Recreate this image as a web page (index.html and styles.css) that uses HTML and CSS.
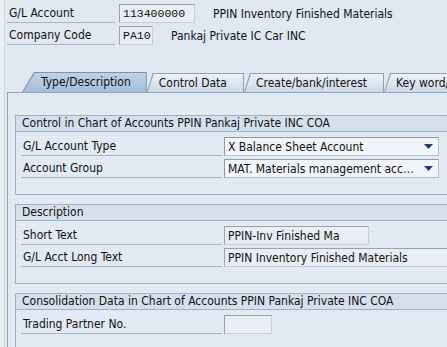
FILE: index.html
```html
<!DOCTYPE html>
<html lang="en">
<head>
    <meta charset="UTF-8">
    <meta name="viewport" content="width=device-width, initial-scale=1.0">
    <title>G/L Account</title>
    <link rel="stylesheet" href="styles.css">
</head>
<body>
    <div class="rail"></div>
    <div class="main">
        <div class="head">
            <div class="hrow">
                <span class="hlabel">G/L Account</span>
                <span class="field mono acct">113400000</span>
                <span class="htext">PPIN Inventory Finished Materials</span>
            </div>
            <div class="hrow">
                <span class="hlabel">Company Code</span>
                <span class="field mono ccode">PA10</span>
                <span class="htext">Pankaj Private IC Car INC</span>
            </div>
        </div>

        <div class="tabs">
            <div class="tab active"><span>Type/Description</span></div>
            <div class="tab"><span>Control Data</span></div>
            <div class="tab"><span>Create/bank/interest</span></div>
            <div class="tab"><span>Key word/translation</span></div>
        </div>

        <div class="panel">
            <div class="group">
                <div class="ghead">Control in Chart of Accounts PPIN Pankaj Private INC COA</div>
                <div class="gbody">
                    <div class="row">
                        <span class="label">G/L Account Type</span>
                        <span class="field select">
                            <span class="val">X Balance Sheet Account</span>
                            <svg class="arrow" width="9" height="5" viewBox="0 0 9 5"><path d="M0 0H9L4.5 5Z" fill="#243f66"/></svg>
                        </span>
                    </div>
                    <div class="row">
                        <span class="label">Account Group</span>
                        <span class="field select">
                            <span class="val">MAT. Materials management accounts</span>
                            <svg class="arrow" width="9" height="5" viewBox="0 0 9 5"><path d="M0 0H9L4.5 5Z" fill="#243f66"/></svg>
                        </span>
                    </div>
                </div>
            </div>

            <div class="group">
                <div class="ghead">Description</div>
                <div class="gbody">
                    <div class="row">
                        <span class="label">Short Text</span>
                        <span class="field short">PPIN-Inv Finished Ma</span>
                    </div>
                    <div class="row">
                        <span class="label">G/L Acct Long Text</span>
                        <span class="field long">PPIN Inventory Finished Materials</span>
                    </div>
                </div>
            </div>

            <div class="group">
                <div class="ghead">Consolidation Data in Chart of Accounts PPIN Pankaj Private INC COA</div>
                <div class="gbody">
                    <div class="row">
                        <span class="label">Trading Partner No.</span>
                        <span class="field partner"></span>
                    </div>
                </div>
            </div>
        </div>
    </div>
</body>
</html>
```

FILE: styles.css
```css
body {
    margin: 0;
    display: flex;
    overflow: hidden;
    height: 347px;
    background: #e0e8f1;
    font-family: "DejaVu Sans Condensed", "Liberation Sans", Arial, sans-serif;
    font-size: 12px;
    color: #111;
}
.rail { flex: none; width: 4px; background: #eceff3; border-right: 1px solid #cdd4dc; }
.main { flex: none; width: 600px; padding-left: 2px; }

/* header fields */
.head { display: flex; flex-direction: column; gap: 3px; padding-top: 4px; }
.hrow { display: flex; align-items: center; height: 19px; }
.hlabel { width: 106px; padding-left: 2px; height: 18px; line-height: 18px; border-bottom: 1px solid #a9b5c3; }
.hrow .field { margin-left: 4px; }
.htext { margin-left: 18px; }

.field {
    display: flex;
    align-items: center;
    box-sizing: border-box;
    height: 19px;
    padding: 0 3px;
    background: #e8eef4;
    border: 1px solid;
    border-color: #9aa3ad #c9cfd6 #c9cfd6 #9aa3ad;
    white-space: nowrap;
}
.mono { font-family: "Liberation Mono", "Courier New", monospace; font-size: 11.5px; }
.acct { width: 76px; }
.ccode { width: 34px; }

/* tab strip */
.tabs { display: flex; align-items: flex-end; height: 20px; margin-top: 27px; padding-left: 15px; }
.tab {
    height: 19px;
    padding: 1px 1px 0 0;
    box-sizing: border-box;
    background: #8aa1bb;
    clip-path: polygon(0 100%, 6px 0, 100% 0, 100% 100%);
}
.tab span {
    display: block;
    height: 18px;
    line-height: 18px;
    padding: 0 16px 0 11px;
    margin-left: 1px;
    background: linear-gradient(#eef3f8, #cbd9e8);
    clip-path: polygon(0 100%, 6px 0, 100% 0, 100% 100%);
    white-space: nowrap;
}
.tab.active { height: 20px; background: #7893b3; clip-path: polygon(0 100%, 12px 0, 100% 0, 100% 100%); }
.tab.active span {
    height: 19px;
    line-height: 19px;
    padding: 0 15px 0 18px;
    background: linear-gradient(#bed2e7, #a5bfdb);
    clip-path: polygon(0 100%, 12px 0, 100% 0, 100% 100%);
}

/* tab content */
.panel {
    height: 400px;
    padding: 22px 0 0 7px;
    background-color: #e3ebf4;
    background-image: radial-gradient(#d9e2ec 0.6px, transparent 0.8px);
    background-size: 4px 4px;
    border: 1px solid #8fa5bf;
    border-right: none;
}
.group { border: 1px solid #9cb0c6; border-right: none; margin-bottom: 9px; }
.ghead { height: 15px; line-height: 15px; padding-left: 6px; background: #d5e0ec; border-bottom: 1px solid #9cb0c6; }
.gbody { display: flex; flex-direction: column; gap: 3px; padding: 5px 0 16px 5px; }
.row { display: flex; align-items: center; height: 19px; }
.label { width: 199px; padding-left: 2px; height: 18px; line-height: 18px; border-bottom: 1px solid #a9b5c3; margin-right: 2px; }

.select { width: 215px; background: #f1f4f8; border-color: #8f98a3 #b9c0c8 #b9c0c8 #8f98a3; gap: 6px; }
.select .val { flex: 1; overflow: hidden; text-overflow: ellipsis; }
.arrow { flex: none; margin-right: 2px; }
.short { width: 145px; }
.long { width: 300px; }
.partner { width: 48px; }
```
